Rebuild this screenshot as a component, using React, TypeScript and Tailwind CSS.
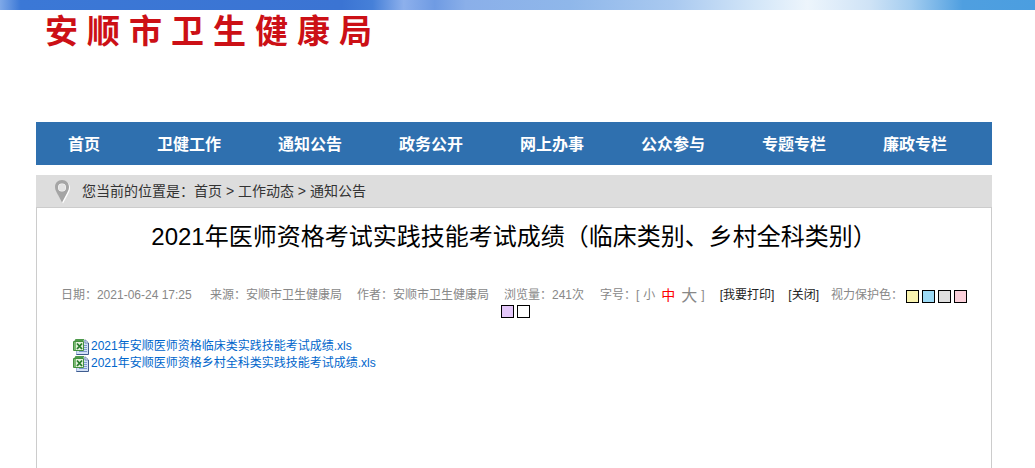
import { useState } from "react";

const navItems = [
  "首页",
  "卫健工作",
  "通知公告",
  "政务公开",
  "网上办事",
  "公众参与",
  "专题专栏",
  "廉政专栏",
];

const files = [
  "2021年安顺医师资格临床类实践技能考试成绩.xls",
  "2021年安顺医师资格乡村全科类实践技能考试成绩.xls",
];

const swatches = [
  { name: "黄色", className: "bg-[#faf4b0]" },
  { name: "蓝色", className: "bg-[#9ddaf5]" },
  { name: "灰色", className: "bg-[#dedede]" },
  { name: "粉色", className: "bg-[#fbd0da]" },
  { name: "紫色", className: "bg-[#e4c8fa]" },
  { name: "白色", className: "bg-white" },
];

const sizes = [
  { label: "小", className: "text-[12px]" },
  { label: "中", className: "text-[14px]" },
  { label: "大", className: "text-[16px]" },
];

function PinIcon() {
  return (
    <svg width="17" height="25" viewBox="0 0 17 25" aria-hidden="true">
      <path
        d="M9 2C4.800 2 1.800 5 1.800 9c0 3 1.800 5.600 3.200 8.400L9 24.500l3.800-7.100C14.300 14.600 16 12 16 9c0-4-2.800-7-7-7z"
        fill="#fff"
      />
      <path
        fillRule="evenodd"
        d="M8 1C3.800 1 1 4 1 8c0 3 1.600 5.300 3 8l4 7.500L12 16c1.400-2.700 3-5 3-8 0-4-2.800-7-7-7zm0 3.500a4 4 0 1 1 0 8 4 4 0 0 1 0-8z"
        fill="#a5a5a5"
      />
      <circle cx="8" cy="8.500" r="3.600" fill="#e2e2e2" />
    </svg>
  );
}

function ExcelIcon() {
  return (
    <svg width="16" height="16" viewBox="0 0 16 16" aria-hidden="true" className="shrink-0">
      <path d="M5 1h7.500L15 3.500V15H4V3z" fill="#d3e0f6" />
      <path d="M3 15.500h12.500V4L12 .8" fill="none" stroke="#3f5c8f" />
      <path d="M12 1v3h3" fill="#f4f8ff" stroke="#6a84b5" />
      <path d="M11 6.500h3M11 8.500h3M11 10.500h3M6 12.500h8" stroke="#7f9bd0" />
      <path d="M3.500 12v3.500" stroke="#9db2da" />
      <path d="M2.500 0h9L10 2.500H1z" fill="#4f9a4c" />
      <path d="M.5 2.500h10v9H.5z" fill="#e5f1dc" stroke="#43903f" />
      <path d="M1 3h2v8H1z" fill="#79b873" />
      <path d="M4 4.500l5 5.500M9 4.500l-5 5.500" stroke="#267b2b" strokeWidth="1.800" />
    </svg>
  );
}

export default function App() {
  const [size, setSize] = useState("中");
  const [paper, setPaper] = useState("bg-white");

  return (
    <div className="flex min-h-screen flex-col bg-white font-['Liberation_Sans','Noto_Sans_CJK_SC',sans-serif]">
      <div className="h-[10px] bg-[linear-gradient(90deg,#7fa9e8_0%,#3b78d6_2%,#3b74d3_33%,#4680d8_36%,#8db0ec_39%,#6f9be3_42%,#8aafe9_45%,#8fb7ea_55%,#a9c9f0_65%,#d3e6f8_73%,#edf5fc_78%,#cfe3f6_84%,#a4cdf0_88%,#4f9fe0_93%,#4b9ee0_100%)]" />

      <header className="h-[112px] pl-[45px]">
        <h1 className="flex gap-[9px] text-[33px] leading-[44px] font-bold text-[#cc1016]">
          {Array.from("安顺市卫生健康局").map((char) => (
            <span key={char}>{char}</span>
          ))}
        </h1>
      </header>

      <div className="mr-[43px] ml-9 flex flex-1 flex-col">
        <nav className="flex h-[43px] items-center justify-between bg-[#2f70af] pt-[2px] pr-[45px] pl-8 text-[16px] font-bold text-white">
          {navItems.map((item) => (
            <a key={item} href="#" className="whitespace-nowrap">
              {item}
            </a>
          ))}
        </nav>

        <div className="mt-[10px] flex h-8 items-center bg-[#ddd] pl-[18px] text-[14px] text-[#333]">
          <PinIcon />
          <p className="ml-[11px]">
            您当前的位置是：<a href="#">首页</a> &gt; <a href="#">工作动态</a> &gt;{" "}
            <a href="#">通知公告</a>
          </p>
        </div>

        <main className={`flex-1 border border-b-0 border-[#ccc] px-5 ${paper}`}>
          <h2 className="pt-[11px] text-center text-[24px] leading-9 text-black">
            2021年医师资格考试实践技能考试成绩（临床类别、乡村全科类别）
          </h2>

          <div className="mt-[33px] flex flex-wrap items-center justify-center text-[12px] leading-[15px] whitespace-nowrap text-[#888]">
            <span className="mr-[15px] w-[134px]">日期：2021-06-24 17:25</span>
            <span className="mr-[15px]">来源：安顺市卫生健康局</span>
            <span className="mr-[15px]">作者：安顺市卫生健康局</span>
            <span className="mr-[15px] w-[81px]">浏览量：241次</span>
            <span className="mr-[15px] flex items-center">
              字号：[
              <span className="mx-1 flex items-center gap-[6px]">
                {sizes.map((s) => (
                  <button
                    key={s.label}
                    onClick={() => setSize(s.label)}
                    className={`leading-[15px] ${s.className} ${size === s.label ? "text-[#f00]" : ""}`}
                  >
                    {s.label}
                  </button>
                ))}
              </span>
              ]
            </span>
            <button onClick={() => window.print()} className="mr-[14px] text-[#222]">
              [我要打印]
            </button>
            <button onClick={() => window.close()} className="mr-3 text-[#222]">
              [关闭]
            </button>
            <span>视力保护色：</span>
            {swatches.map((s) => (
              <button
                key={s.name}
                aria-label={s.name}
                onClick={() => setPaper(s.className)}
                className={`mt-[2px] ml-[3px] size-[13px] border border-black ${s.className}`}
              />
            ))}
          </div>

          <ul className="mt-5 pl-4 text-[12px] leading-[17px] text-[#06c]">
            {files.map((file) => (
              <li key={file}>
                <a href="#" className="flex items-center gap-[2px]">
                  <ExcelIcon />
                  {file}
                </a>
              </li>
            ))}
          </ul>
        </main>
      </div>
    </div>
  );
}
